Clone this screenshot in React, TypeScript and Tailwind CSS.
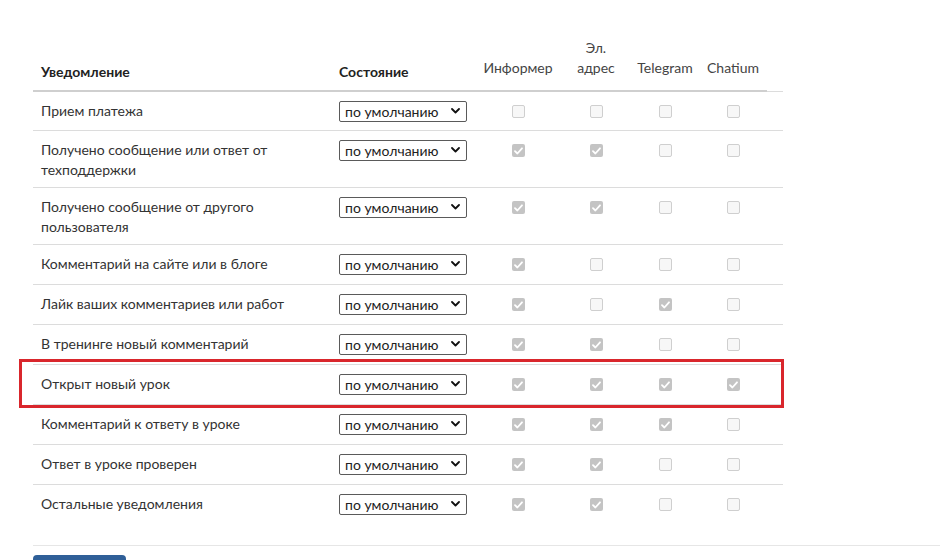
import React from 'react';

type Row = { title: string; checks: number[] };

const rows: Row[] = [
  { title: 'Прием платежа', checks: [0, 0, 0, 0] },
  { title: 'Получено сообщение или ответ от техподдержки', checks: [1, 1, 0, 0] },
  { title: 'Получено сообщение от другого пользователя', checks: [1, 1, 0, 0] },
  { title: 'Комментарий на сайте или в блоге', checks: [1, 0, 0, 0] },
  { title: 'Лайк ваших комментариев или работ', checks: [1, 0, 1, 0] },
  { title: 'В тренинге новый комментарий', checks: [1, 1, 0, 0] },
  { title: 'Открыт новый урок', checks: [1, 1, 1, 1] },
  { title: 'Комментарий к ответу в уроке', checks: [1, 1, 1, 0] },
  { title: 'Ответ в уроке проверен', checks: [1, 1, 0, 0] },
  { title: 'Остальные уведомления', checks: [1, 1, 0, 0] },
];

const cols = 'grid grid-cols-[298px_144px_86px_70px_68px_68px_16px]';

const Check: React.FC<{ on: boolean }> = ({ on }) =>
  on ? (
    <span className="flex h-[13px] w-[13px] items-center justify-center rounded-[2px] bg-[#c4c4c4]">
      <svg width="9" height="8" viewBox="0 0 9 8" fill="none">
        <path d="M1 4.2 3.4 6.5 8 1.3" stroke="#fff" strokeWidth="1.8" strokeLinecap="round" strokeLinejoin="round" />
      </svg>
    </span>
  ) : (
    <span className="block h-[13px] w-[13px] rounded-[2px] border border-[#cfcfcf] bg-[#f7f7f7]" />
  );

const StateSelect: React.FC = () => (
  <div className="relative h-[21px] w-[128px]">
    <select
      defaultValue="default"
      className="h-full w-full appearance-none rounded-[2px] border border-[#5a5a5a] bg-white pl-[5px] text-[14px] leading-[19px] text-[#222] outline-none"
    >
      <option value="default">по умолчанию</option>
      <option value="on">включено</option>
      <option value="off">выключено</option>
    </select>
    <svg
      className="pointer-events-none absolute right-[7px] top-[7px]"
      width="9"
      height="6"
      viewBox="0 0 9 6"
      fill="none"
    >
      <path d="M1 1 4.5 4.5 8 1" stroke="#111" strokeWidth="1.8" strokeLinecap="round" strokeLinejoin="round" />
    </svg>
  </div>
);

export default function App() {
  return (
    <div className="min-h-[560px] bg-white pt-[38px] font-['Lato','Liberation_Sans',sans-serif] text-[14px] text-[#333]">
      <div className="ml-[33px] w-[750px]">
        <div className={cols}>
          <div className="flex items-end border-b-2 border-[#cfcfcf] pb-[8px] pl-[8px] leading-[20px] font-bold text-[#222]">
            Уведомление
          </div>
          <div className="flex items-end border-b-2 border-[#cfcfcf] pb-[8px] pl-[8px] leading-[20px] font-bold text-[#222]">
            Состояние
          </div>
          {['Информер', 'Эл. адрес', 'Telegram', 'Chatium'].map((h) => (
            <div
              key={h}
              className="flex items-end justify-center border-b-2 border-[#cfcfcf] pb-[12px] text-center leading-[20px] text-[#444]"
            >
              {h === 'Эл. адрес' ? (
                <span>
                  Эл.
                  <br />
                  адрес
                </span>
              ) : (
                h
              )}
            </div>
          ))}
          <div className="border-b border-[#dcdcdc]" />
        </div>

        {rows.map((r, i) => (
          <div
            key={r.title}
            className={`${cols} relative ${i < rows.length - 1 ? 'border-b border-[#dcdcdc]' : ''}`}
          >
            <div className="max-w-[290px] pl-[8px] pr-[6px] pt-[9px] pb-[7px] leading-[20px]">{r.title}</div>
            <div className={`pl-[8px] pt-[9px] ${i === 0 ? 'pb-[8px]' : 'pb-[9px]'}`}>
              <StateSelect />
            </div>
            {r.checks.map((c, j) => (
              <div key={j} className="flex justify-center pt-[13px]">
                <Check on={c === 1} />
              </div>
            ))}
            <div />
            {r.title === 'Открыт новый урок' && (
              <div className="pointer-events-none absolute -left-[14px] -right-[1px] -top-[6px] -bottom-[4px] border-[3px] border-[#d9262c]" />
            )}
          </div>
        ))}
      </div>

      <div className="ml-[33px] mt-[21px] border-t border-[#e6e6e6]" />
      <div className="ml-[33px] mt-[9px]">
        <button className="h-[30px] w-[93px] rounded-[4px] bg-[#2f5f98] text-[14px] text-white">Сохранить</button>
      </div>
    </div>
  );
}
